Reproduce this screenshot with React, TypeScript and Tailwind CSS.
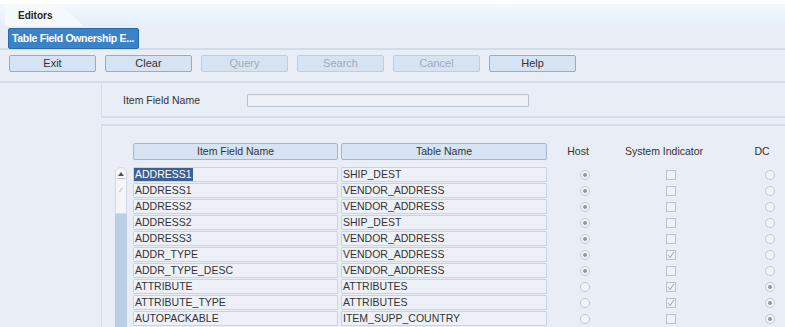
import React from 'react';

interface Row {
  field: string;
  table: string;
  host: boolean;
  sys: boolean;
  dc: boolean;
}

const rows: Row[] = [
  { field: 'ADDRESS1', table: 'SHIP_DEST', host: true, sys: false, dc: false },
  { field: 'ADDRESS1', table: 'VENDOR_ADDRESS', host: true, sys: false, dc: false },
  { field: 'ADDRESS2', table: 'VENDOR_ADDRESS', host: true, sys: false, dc: false },
  { field: 'ADDRESS2', table: 'SHIP_DEST', host: true, sys: false, dc: false },
  { field: 'ADDRESS3', table: 'VENDOR_ADDRESS', host: true, sys: false, dc: false },
  { field: 'ADDR_TYPE', table: 'VENDOR_ADDRESS', host: true, sys: true, dc: false },
  { field: 'ADDR_TYPE_DESC', table: 'VENDOR_ADDRESS', host: true, sys: false, dc: false },
  { field: 'ATTRIBUTE', table: 'ATTRIBUTES', host: false, sys: true, dc: true },
  { field: 'ATTRIBUTE_TYPE', table: 'ATTRIBUTES', host: false, sys: true, dc: true },
  { field: 'AUTOPACKABLE', table: 'ITEM_SUPP_COUNTRY', host: false, sys: false, dc: true },
];

const ToolButton: React.FC<{ label: string; disabled?: boolean }> = ({ label, disabled }) => (
  <div
    className={`w-[87px] h-[17px] flex items-center justify-center rounded-[2px] border text-[11px] leading-none bg-[#d5e3f3] ${
      disabled ? 'border-[#c3ccd8] text-[#a3abb7]' : 'border-[#9eabbd] text-[#333]'
    }`}
  >
    {label}
  </div>
);

const Radio: React.FC<{ on: boolean }> = ({ on }) => (
  <div className="w-[10px] h-[10px] rounded-full border border-[#c2c8d0] bg-[#f1f4f8] flex items-center justify-center">
    {on && <div className="w-[4px] h-[4px] rounded-full bg-[#8f959d]" />}
  </div>
);

const Check: React.FC<{ on: boolean }> = ({ on }) => (
  <div className="w-[10px] h-[10px] border border-[#bcc2ca] bg-[#eef1f6] flex items-center justify-center">
    {on && (
      <svg width="8" height="8" viewBox="0 0 8 8">
        <path d="M1 4 L3 6.5 L7 1" fill="none" stroke="#9aa0a8" strokeWidth="1" />
      </svg>
    )}
  </div>
);

export default function App() {
  return (
    <div
      className="w-[785px] h-[327px] overflow-hidden bg-[#e9edf5] text-[#333]"
      style={{ fontFamily: '"Liberation Sans", Arial, sans-serif' }}
    >
      {/* tab strip */}
      <div className="h-[26px] bg-white pt-[4px]">
        <div className="h-[22px] bg-gradient-to-b from-[#f3f8fd] to-[#e4effb] flex">
          <div className="ml-[5px] w-[78px] h-full bg-[#f6f9fc] [clip-path:polygon(0_0,70%_0,100%_100%,0_100%)] flex items-center pl-[13px] text-[10px] font-bold text-[#222]">
            Editors
          </div>
        </div>
      </div>

      {/* window title */}
      <div className="h-[24px] pt-[2px] pl-[8px] border-b-2 border-[#d3dce8]">
        <div className="w-[131px] h-[21px] rounded-[2px] bg-[#3a83c8] border border-[#2a6aa8] flex items-center pl-[3px] text-[10.5px] tracking-[-0.3px] font-bold text-white whitespace-nowrap overflow-hidden">
          Table Field Ownership E...
        </div>
      </div>

      {/* toolbar */}
      <div className="h-[33px] flex items-start pt-[5px] pl-[9px] gap-x-[9px] border-b-2 border-[#d3dce8]">
        <ToolButton label="Exit" />
        <ToolButton label="Clear" />
        <ToolButton label="Query" disabled />
        <ToolButton label="Search" disabled />
        <ToolButton label="Cancel" disabled />
        <ToolButton label="Help" />
      </div>

      <div className="flex">
        <div className="w-[101px] shrink-0" />
        <div className="flex-1">
          {/* search panel */}
          <div className="h-[35px] pt-[2px] border-l border-b-2 border-[#d5dde8] flex items-center">
            <span className="ml-[21px] w-[124px] text-[10.5px]">Item Field Name</span>
            <div className="w-[282px] h-[13px] border border-[#b9c3cf] bg-[#eef2f8] rounded-[1px]" />
          </div>

          {/* results panel */}
          <div className="mt-[6px] h-[210px] border-l border-t-2 border-[#d5dde8] pt-[17px]">
            <div className="flex items-center h-[17px]">
              <div className="w-[31px]" />
              <div className="w-[205px] h-[17px] rounded-[2px] bg-[#d5e3f3] border border-[#a7b6c8] flex items-center justify-center text-[10.5px]">
                Item Field Name
              </div>
              <div className="w-[206px] ml-[3px] h-[17px] rounded-[2px] bg-[#d5e3f3] border border-[#a7b6c8] flex items-center justify-center text-[10.5px]">
                Table Name
              </div>
              <div className="w-[62px] text-center text-[10.5px]">Host</div>
              <div className="w-[110px] text-center text-[10.5px]">System Indicator</div>
              <div className="w-[86px] text-center text-[10.5px]">DC</div>
            </div>

            <div className="flex mt-[7px]">
              {/* scrollbar */}
              <div className="ml-[13px] w-[12px] h-[170px] flex flex-col">
                <div className="h-[47px] bg-[#f3f5f9] border border-[#d3d9e2] rounded-t-[6px] flex flex-col items-center">
                  <div className="mt-[4px] w-0 h-0 border-l-[3px] border-r-[3px] border-b-[4px] border-l-transparent border-r-transparent border-b-[#555]" />
                  <div className="mt-[2px] w-[8px] h-px bg-[#b9c1cc]" />
                  <div className="mt-[8px] text-[6px] leading-none text-[#9aa6b4]">⁄⁄</div>
                </div>
                <div className="flex-1 bg-[#bccfe6]" />
              </div>

              <div className="ml-[6px] flex flex-col gap-y-[1px]">
                {rows.map((r, i) => (
                  <div key={i} className="flex items-center h-[15px]">
                    <div className="w-[205px] h-[15px] border border-[#c5d4e7] bg-[#edf1f7] rounded-[1px] flex items-center text-[10.5px] leading-none">
                      {i === 0 ? (
                        <span className="bg-[#3e5f8f] text-white px-[1px] h-[13px] flex items-center">{r.field}</span>
                      ) : (
                        <span className="pl-[1px]">{r.field}</span>
                      )}
                    </div>
                    <div className="w-[206px] ml-[3px] h-[15px] border border-[#c5d4e7] bg-[#edf1f7] rounded-[1px] flex items-center pl-[1px] text-[10.5px] leading-none">
                      {r.table}
                    </div>
                    <div className="w-[62px] flex justify-center pl-[13px]">
                      <Radio on={r.host} />
                    </div>
                    <div className="w-[110px] flex justify-center pl-[14px]">
                      <Check on={r.sys} />
                    </div>
                    <div className="w-[86px] flex justify-center pl-[16px]">
                      <Radio on={r.dc} />
                    </div>
                  </div>
                ))}
              </div>
            </div>
          </div>
        </div>
      </div>
    </div>
  );
}
